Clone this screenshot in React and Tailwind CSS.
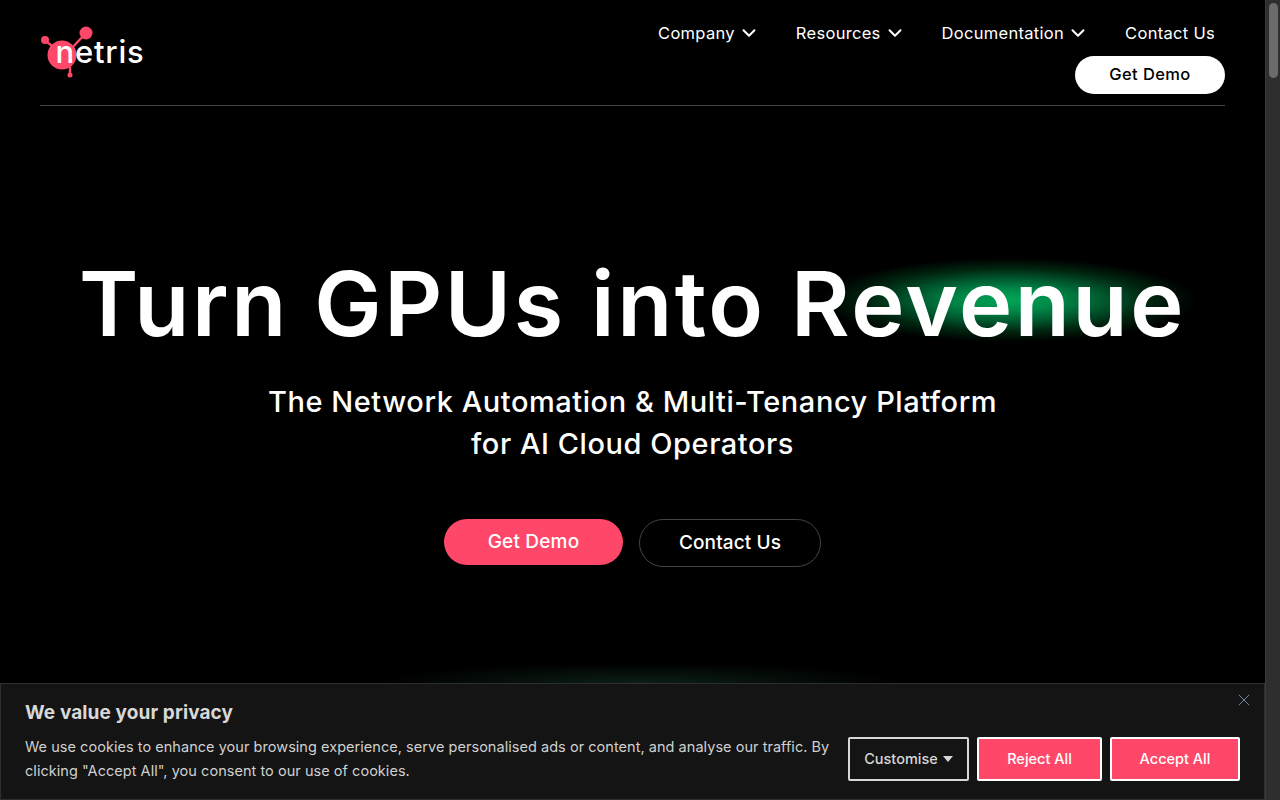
import React from 'react';
import { ChevronDown, X } from 'lucide-react';

const NavLink = ({ label, hasMenu }) => (
  <a className="flex items-center gap-[3px] text-[16.5px] text-white tracking-[0.3px]">
    {label}
    {hasMenu && <ChevronDown className="w-[22px] h-[22px]" strokeWidth={2.2} />}
  </a>
);

const Logo = () => (
  <div className="relative w-[105px] h-[56px]">
    <svg width="60" height="56" viewBox="0 0 60 56" className="absolute left-0 top-0">
      <g fill="#ff4769" stroke="#ff4769">
        <path d="M5 18 L20 31 M46 11 L30 28 M30 44 L30 53" strokeWidth="2.4" fill="none" />
        <circle cx="22" cy="33" r="14.5" stroke="none" />
        <circle cx="5" cy="18" r="4" stroke="none" />
        <circle cx="46" cy="11" r="6.5" stroke="none" />
        <circle cx="30" cy="53" r="2.5" stroke="none" />
      </g>
    </svg>
    <span className="absolute left-[15.5px] top-[10px] text-[31px] leading-[40px] font-medium text-white tracking-[0.8px]">
      netris
    </span>
  </div>
);

const Header = () => (
  <header className="flex justify-between border-b border-[#444444] h-[106px]">
    <div className="pt-[22px]">
      <Logo />
    </div>
    <div className="flex flex-col items-end pt-[21px]">
      <nav className="flex items-center gap-[36px] pr-[10px] h-[24px]">
        <NavLink label="Company" hasMenu />
        <NavLink label="Resources" hasMenu />
        <NavLink label="Documentation" hasMenu />
        <NavLink label="Contact Us" />
      </nav>
      <button className="mt-[11px] w-[150px] h-[38px] pb-[1px] rounded-full bg-white text-black text-[16.5px] font-medium tracking-[0.4px]">
        Get Demo
      </button>
    </div>
  </header>
);

const Hero = () => (
  <section className="flex flex-col items-center pt-[138px]">
    <h1 className="text-[90px] leading-[120px] font-semibold text-white tracking-[2.6px] whitespace-nowrap">
      Turn GPUs into{' '}
      <span className="relative inline-block">
        <span className="absolute left-[30px] right-[-10px] top-[14px] bottom-[22px] bg-[radial-gradient(ellipse_50%_50%_at_center,#00a557_0%,#008a48_25%,#005a30_50%,#00250f_75%,#000000_100%)]" />
        <span className="relative">Revenue</span>
      </span>
    </h1>
    <p className="mt-[17px] text-[29px] leading-[42px] font-medium text-white text-center tracking-[0.55px]">
      The Network Automation &amp; Multi-Tenancy Platform
      <br />
      for AI Cloud Operators
    </p>
    <div className="flex items-start gap-[16px] mt-[54px]">
      <button className="w-[179px] h-[46px] rounded-full bg-[#ff4769] text-white text-[19px] font-medium tracking-[0.2px]">
        Get Demo
      </button>
      <button className="w-[182px] h-[48px] rounded-full bg-black border border-[#444444] text-white text-[19px] font-medium tracking-[0.1px]">
        Contact Us
      </button>
    </div>
  </section>
);

const CookieBanner = () => (
  <div className="absolute left-0 right-0 bottom-0 h-[117px] bg-[#141414] border border-[#2e2e2e] px-[24px] pt-[17px]">
    <button className="absolute right-[10px] top-[6px] text-[#7484a3]">
      <X className="w-[20px] h-[20px]" strokeWidth={1.2} />
    </button>
    <h2 className="text-[19px] leading-[24px] font-bold text-[#d8d8d8] tracking-[0.1px]">We value your privacy</h2>
    <div className="flex justify-between items-start mt-[10px]">
      <p className="w-[812px] text-[14.5px] leading-[24px] text-[#d0d0d0] tracking-[0.04px]">
        We use cookies to enhance your browsing experience, serve personalised ads or content, and analyse our traffic. By clicking "Accept All", you consent to our use of cookies.
      </p>
      <div className="flex gap-[8px] ml-[11px] mt-[2px] shrink-0">
        <button className="flex items-center justify-center gap-[5px] w-[121px] h-[44px] border-2 border-[#d8d8d8] rounded-[2px] text-[#d8d8d8] text-[14.5px] font-medium">
          Customise
          <span className="w-0 h-0 border-x-[5px] border-x-transparent border-t-[6px] border-t-[#d8d8d8]" />
        </button>
        <button className="w-[125px] h-[44px] border-2 border-white rounded-[2px] bg-[#ff4769] text-white text-[14.5px] font-medium">
          Reject All
        </button>
        <button className="w-[130px] h-[44px] border-2 border-white rounded-[2px] bg-[#ff4769] text-white text-[14.5px] font-medium">
          Accept All
        </button>
      </div>
    </div>
  </div>
);

export default function App() {
  return (
    <div className="flex h-screen overflow-hidden bg-black font-['Inter',sans-serif]">
      <main className="relative flex-1 overflow-hidden px-[40px]">
        <Header />
        <Hero />
        {/* faint green glow peeking above the banner */}
        <div className="absolute left-[380px] w-[520px] bottom-[97px] h-[40px] bg-[radial-gradient(ellipse_50%_50%_at_center,#0c1f15_0%,#000000_100%)]" />
        <CookieBanner />
      </main>
      {/* scrollbar */}
      <div className="w-[15px] bg-[#2e2e2e] border-l border-[#3a3a3a] pt-[3px] pl-[3px]">
        <div className="w-[9px] h-[75px] rounded-full bg-[#6b6b6b]" />
      </div>
    </div>
  );
}
